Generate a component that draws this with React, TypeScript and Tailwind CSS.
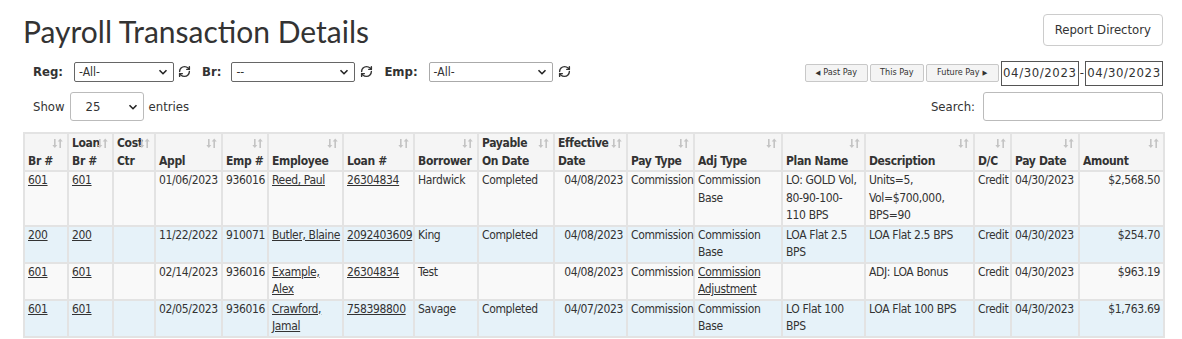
import React from 'react';
import { RefreshCw } from 'lucide-react';

type Cell = { text: string[]; link?: boolean; right?: boolean };

interface Row {
  br: string;
  loanBr: string;
  appl: string;
  emp: string;
  employee: string[];
  loan: string;
  borrower: string;
  payable: string;
  effective: string;
  payType: string;
  adjType: string[];
  adjLink?: boolean;
  plan: string[];
  desc: string[];
  dc: string;
  payDate: string;
  amount: string;
}

const ROWS: Row[] = [
  {
    br: '601', loanBr: '601', appl: '01/06/2023', emp: '936016', employee: ['Reed, Paul'], loan: '26304834',
    borrower: 'Hardwick', payable: 'Completed', effective: '04/08/2023', payType: 'Commission',
    adjType: ['Commission', 'Base'], plan: ['LO: GOLD Vol,', '80-90-100-', '110 BPS'],
    desc: ['Units=5,', 'Vol=$700,000,', 'BPS=90'], dc: 'Credit', payDate: '04/30/2023', amount: '$2,568.50',
  },
  {
    br: '200', loanBr: '200', appl: '11/22/2022', emp: '910071', employee: ['Butler, Blaine'], loan: '2092403609',
    borrower: 'King', payable: 'Completed', effective: '04/08/2023', payType: 'Commission',
    adjType: ['Commission', 'Base'], plan: ['LOA Flat 2.5', 'BPS'],
    desc: ['LOA Flat 2.5 BPS'], dc: 'Credit', payDate: '04/30/2023', amount: '$254.70',
  },
  {
    br: '601', loanBr: '601', appl: '02/14/2023', emp: '936016', employee: ['Example,', 'Alex'], loan: '26304834',
    borrower: 'Test', payable: '', effective: '04/08/2023', payType: 'Commission',
    adjType: ['Commission', 'Adjustment'], adjLink: true, plan: [],
    desc: ['ADJ: LOA Bonus'], dc: 'Credit', payDate: '04/30/2023', amount: '$963.19',
  },
  {
    br: '601', loanBr: '601', appl: '02/05/2023', emp: '936016', employee: ['Crawford,', 'Jamal'], loan: '758398800',
    borrower: 'Savage', payable: 'Completed', effective: '04/07/2023', payType: 'Commission',
    adjType: ['Commission', 'Base'], plan: ['LO Flat 100', 'BPS'],
    desc: ['LOA Flat 100 BPS'], dc: 'Credit', payDate: '04/30/2023', amount: '$1,763.69',
  },
];

const HEADERS: { label: string[]; w: number }[] = [
  { label: ['', 'Br #'], w: 44 },
  { label: ['Loan', 'Br #'], w: 45 },
  { label: ['Cost', 'Ctr'], w: 42 },
  { label: ['', 'Appl'], w: 67 },
  { label: ['', 'Emp #'], w: 46 },
  { label: ['', 'Employee'], w: 75 },
  { label: ['', 'Loan #'], w: 71 },
  { label: ['', 'Borrower'], w: 64 },
  { label: ['Payable', 'On Date'], w: 76 },
  { label: ['Effective', 'Date'], w: 73 },
  { label: ['', 'Pay Type'], w: 67 },
  { label: ['', 'Adj Type'], w: 88 },
  { label: ['', 'Plan Name'], w: 83 },
  { label: ['', 'Description'], w: 109 },
  { label: ['', 'D/C'], w: 37 },
  { label: ['', 'Pay Date'], w: 68 },
  { label: ['', 'Amount'], w: 85 },
];

const SortIcon = () => (
  <svg className="absolute right-[4px] top-[4px]" width="11" height="11" viewBox="0 0 11 11" fill="#c4c4c4">
    <rect x="2" y="1" width="1.6" height="7" />
    <polygon points="0.3,7 5.3,7 2.8,10" />
    <rect x="7.4" y="3" width="1.6" height="7" />
    <polygon points="5.7,3.5 10.7,3.5 8.2,0.5" />
  </svg>
);

const Lines = ({ lines, link }: { lines: string[]; link?: boolean }) => (
  <>
    {lines.map((l, i) => (
      <div key={i} className={link ? 'underline' : ''}>
        {l}
      </div>
    ))}
  </>
);

const td = 'border-2 border-[#e3e3e3] px-[3px] py-0 align-top';

const Chevron = () => (
  <svg width="10" height="10" viewBox="0 0 10 10" className="absolute right-[5px] top-1/2 -translate-y-1/2">
    <path d="M1.5 3.2 L5 6.7 L8.5 3.2" fill="none" stroke="#222" strokeWidth="1.6" />
  </svg>
);

const FakeSelect = ({ value, w, border }: { value: string; w: string; border: string }) => (
  <div className={`relative h-[20px] ${w} border ${border} rounded-[2px] bg-white text-[12px] leading-[18px] pl-[4px] text-[#333]`}>
    {value}
    <Chevron />
  </div>
);

export default function App() {
  return (
    <div
      className="w-[1182px] h-[339px] overflow-hidden bg-white text-[#333]"
      style={{ fontFamily: '"DejaVu Sans Condensed", "Liberation Sans", sans-serif', fontStretch: 'condensed' }}
    >
      <div className="ml-[23px] w-[1140px]">
        <div className="flex items-start justify-between pt-[14px]">
          <h1
            className="text-[30px] leading-[34px] text-[#333]"
            style={{ fontFamily: 'Lato, "Open Sans", sans-serif', fontStretch: 'normal' }}
          >
            Payroll Transaction Details
          </h1>
          <button className="h-[32px] px-[11px] border border-[#ccc] rounded-[4px] bg-white text-[13px] text-[#333]">
            Report Directory
          </button>
        </div>

        <div className="flex items-center justify-between mt-[11px] h-[25px]">
          <div className="flex items-center pl-[10px] text-[13px]">
            <span className="font-bold mr-[11px]">Reg:</span>
            <FakeSelect value="-All-" w="w-[100px]" border="border-[#666]" />
            <RefreshCw size={13} strokeWidth={2.6} className="ml-[4px] text-[#333]" />
            <span className="font-bold ml-[11px] mr-[10px]">Br:</span>
            <FakeSelect value="--" w="w-[124px]" border="border-[#666]" />
            <RefreshCw size={13} strokeWidth={2.6} className="ml-[5px] text-[#333]" />
            <span className="font-bold ml-[11px] mr-[11px]">Emp:</span>
            <FakeSelect value="-All-" w="w-[124px]" border="border-[#aaa]" />
            <RefreshCw size={13} strokeWidth={2.6} className="ml-[5px] text-[#333]" />
          </div>
          <div className="flex items-center text-[9px] mt-[3px]">
            <button className="h-[18px] w-[63px] border border-[#c8c8c8] rounded-[2px] bg-[#f4f4f4] flex items-center justify-center gap-[3px]">
              <span className="text-[7px]">◀</span>Past Pay
            </button>
            <button className="h-[18px] w-[54px] ml-[2px] border border-[#c8c8c8] rounded-[2px] bg-[#f4f4f4]">This Pay</button>
            <button className="h-[18px] w-[73px] ml-[2px] border border-[#c8c8c8] rounded-[2px] bg-[#f4f4f4] flex items-center justify-center gap-[3px]">
              Future Pay<span className="text-[7px]">▶</span>
            </button>
            <div className="ml-[2px] h-[25px] w-[78px] border border-[#555] text-[13px] flex items-center justify-center tracking-[0.6px]">
              04/30/2023
            </div>
            <span className="text-[13px] mx-[1px]">-</span>
            <div className="h-[25px] w-[78px] border border-[#555] text-[13px] flex items-center justify-center tracking-[0.6px]">
              04/30/2023
            </div>
          </div>
        </div>

        <div className="flex items-center justify-between mt-[8px] h-[29px]">
          <div className="flex items-center pl-[10px] text-[13px]">
            <span>Show</span>
            <div className="relative ml-[5px] h-[29px] w-[74px] border border-[#bbb] rounded-[3px] text-[13px] leading-[27px] pl-[15px]">
              25
              <Chevron />
            </div>
            <span className="ml-[5px]">entries</span>
          </div>
          <div className="flex items-center text-[13px]">
            <span>Search:</span>
            <div className="ml-[8px] h-[29px] w-[180px] border border-[#bbb] rounded-[3px] bg-white" />
          </div>
        </div>

        <table className="mt-[11px] table-fixed border-collapse w-[1140px] text-[12px] leading-[17.5px] tracking-[-0.35px]">
          <colgroup>
            {HEADERS.map((h, i) => (
              <col key={i} style={{ width: h.w }} />
            ))}
          </colgroup>
          <thead>
            <tr>
              {HEADERS.map((h, i) => (
                <th
                  key={i}
                  className="relative border-2 border-[#e3e3e3] bg-[#f5f5f5] px-[3px] pt-[1px] pb-0 text-left align-bottom font-bold whitespace-nowrap"
                >
                  <SortIcon />
                  <div className="h-[17.5px]">{h.label[0]}</div>
                  <div>{h.label[1]}</div>
                </th>
              ))}
            </tr>
          </thead>
          <tbody>
            {ROWS.map((r, i) => {
              const bg = i % 2 === 0 ? 'bg-[#f9f9f9]' : 'bg-[#e6f2f9]';
              const cells: Cell[] = [
                { text: [r.br], link: true },
                { text: [r.loanBr], link: true },
                { text: [] },
                { text: [r.appl] },
                { text: [r.emp] },
                { text: r.employee, link: true },
                { text: [r.loan], link: true },
                { text: [r.borrower] },
                { text: [r.payable] },
                { text: [r.effective], right: true },
                { text: [r.payType] },
                { text: r.adjType, link: r.adjLink },
                { text: r.plan },
                { text: r.desc },
                { text: [r.dc] },
                { text: [r.payDate] },
                { text: [r.amount], right: true },
              ];
              return (
                <tr key={i} className={bg}>
                  {cells.map((c, j) => (
                    <td key={j} className={`${td} ${c.right ? 'text-right' : 'text-left'} whitespace-nowrap`}>
                      <Lines lines={c.text} link={c.link} />
                    </td>
                  ))}
                </tr>
              );
            })}
          </tbody>
        </table>
      </div>
    </div>
  );
}
